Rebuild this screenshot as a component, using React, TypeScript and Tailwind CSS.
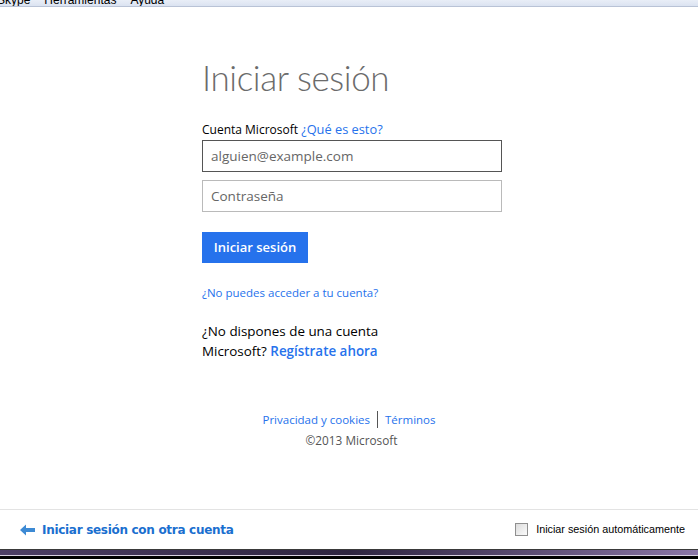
const segoe = { fontFamily: '"Open Sans", "Noto Sans", sans-serif' };

function BackArrow() {
  return (
    <svg width="15" height="12" viewBox="0 0 15 12" className="shrink-0">
      <path d="M0 6 L6 0.5 L6 4 L15 4 L15 8 L6 8 L6 11.5 Z" fill="#3d8ad4" />
    </svg>
  );
}

export default function App() {
  return (
    <div className="flex h-[559px] w-[698px] flex-col overflow-hidden bg-white">
      {/* menu strip, cut off at the top of the window */}
      <div className="h-[7px] shrink-0 overflow-hidden border-b border-[#b9c3d6] bg-gradient-to-b from-[#e9eef7] to-[#dbe3f1]">
        <div
          className="-mt-[9px] flex gap-[14px] text-[12px] text-black"
          style={{ fontFamily: '"Liberation Sans", Arial, sans-serif' }}
        >
          <span className="-ml-[3px]">Skype</span>
          <span>Herramientas</span>
          <span>Ayuda</span>
        </div>
      </div>

      <main className="flex-1 pl-[202px] pt-[48px]" style={segoe}>
        <h1
          className="text-[35px] font-light leading-[44px] tracking-[-0.4px] text-[#6b6b6b]"
          style={{ fontFamily: 'Lato, "Open Sans", sans-serif' }}
        >
          Iniciar sesión
        </h1>

        <p className="mt-[22px] text-[12px] leading-[16px] text-black">
          Cuenta Microsoft <a className="text-[12.8px] text-[#2672ec]">¿Qué es esto?</a>
        </p>

        <div className="mt-[2px] flex w-[300px] flex-col gap-[8px]">
          <div className="flex h-[32px] items-center border border-[#555] px-[8px] text-[13.5px] text-[#666]">
            alguien@example.com
          </div>
          <div className="flex h-[32px] items-center border border-[#bababa] px-[8px] text-[13.5px] text-[#666]">
            Contraseña
          </div>
        </div>

        <button className="mt-[20px] h-[31px] w-[106px] bg-[#2672ec] text-[13px] font-semibold text-white">
          Iniciar sesión
        </button>

        <p className="mt-[21px] text-[11.5px] leading-[17px] text-[#2672ec]">
          ¿No puedes acceder a tu cuenta?
        </p>

        <div className="mt-[20px] text-[13.4px] leading-[20px] text-black">
          <div>¿No dispones de una cuenta</div>
          <div>
            Microsoft? <a className="font-semibold text-[#2672ec]">Regístrate ahora</a>
          </div>
        </div>

        <div className="mt-[48px] -ml-[202px] flex flex-col items-center text-[11.5px] leading-[21px]">
          <div className="flex items-center text-[#2672ec]">
            <span>Privacidad y cookies</span>
            <span className="mx-[7px] h-[17px] border-l border-[#555]" />
            <span>Términos</span>
          </div>
          <div className="pl-[5px] text-[11.8px] text-[#555]">©2013 Microsoft</div>
        </div>
      </main>

      <footer className="flex h-[40px] shrink-0 items-center justify-between border-t border-[#e3e3e3] pl-[20px] pr-[13px]">
        <div
          className="flex items-center gap-[7px] text-[12px] font-bold tracking-[-0.3px] text-[#1a6fcf]"
          style={{ fontFamily: '"DejaVu Sans", Tahoma, sans-serif' }}
        >
          <BackArrow />
          Iniciar sesión con otra cuenta
        </div>
        <label
          className="flex items-center gap-[8px] text-[10.8px] text-black"
          style={{ fontFamily: '"Liberation Sans", Arial, sans-serif' }}
        >
          <span className="h-[13px] w-[13px] border border-[#8f8f8f] bg-gradient-to-br from-[#dcdcdc] to-[#fbfbfb]" />
          Iniciar sesión automáticamente
        </label>
      </footer>

      <div className="h-[10px] shrink-0">
        <div className="h-px bg-[#3a3a3a]" />
        <div className="h-[5px] bg-gradient-to-r from-[#4e3f66] via-[#2e2440] to-[#8c77a8]" />
        <div className="h-px bg-[#d8d0e0]" />
        <div className="h-[3px] bg-black" />
      </div>
    </div>
  );
}
